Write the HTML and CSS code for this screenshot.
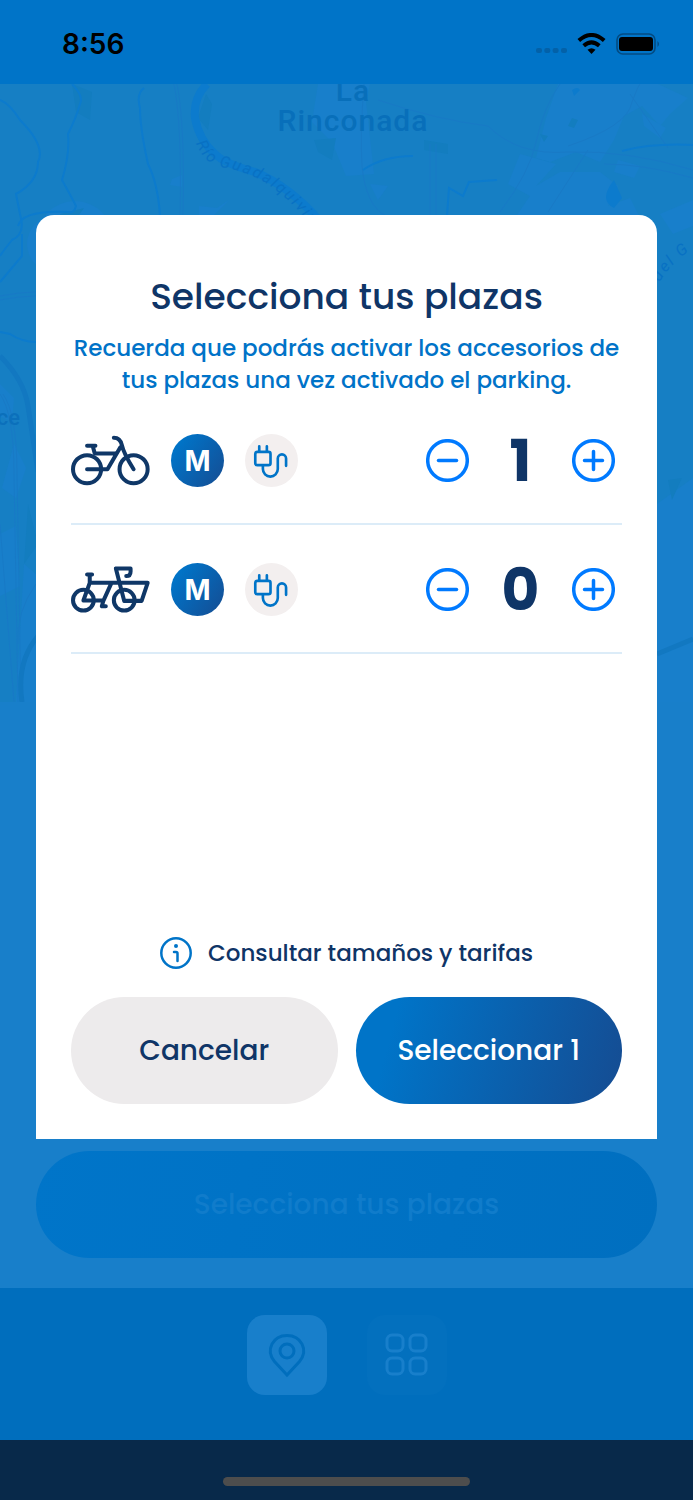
FILE: index.html
```html
<!DOCTYPE html>
<html lang="es">
<head>
  <meta charset="UTF-8" />
  <meta name="viewport" content="width=device-width, initial-scale=1.0"/>
  <title>Selecciona tus plazas</title>
  <link rel="stylesheet" href="styles.css">
</head>
<body>

  <!-- shared icons -->
  <svg class="sprite" aria-hidden="true">
    <symbol id="plug" viewBox="0 0 160 160">
      <rect x="31" y="54" width="46" height="40" rx="6"/>
      <path d="M43 37v15M66 37v15M54 96v10a22 22 0 0 0 45 0V74a12 12 0 0 1 25 0v22"/>
    </symbol>
    <symbol id="minus" viewBox="0 0 43 43">
      <circle cx="21.5" cy="21.5" r="19.8"/>
      <path d="M12.5 21.5h18"/>
    </symbol>
    <symbol id="plus" viewBox="0 0 43 43">
      <circle cx="21.5" cy="21.5" r="19.8"/>
      <path d="M12.5 21.5h18M21.5 12.5v18"/>
    </symbol>
  </svg>

  <div class="screen">

    <header class="status-bar">
      <span class="time">8:56</span>
      <div class="status-icons">
        <svg class="signal" width="31" height="22" viewBox="0 0 31 22">
          <rect x="0" y="15" width="6" height="5" rx="2"/>
          <rect x="8.300" y="15" width="6" height="5" rx="2"/>
          <rect x="16.600" y="15" width="6" height="5" rx="2"/>
          <rect x="25" y="15" width="6" height="5" rx="2"/>
        </svg>
        <svg width="29" height="22" viewBox="0 0 29 22">
          <path d="M1.800 7.600Q14.500 -3.600 27.200 7.600" fill="none" stroke="#000" stroke-width="4"/>
          <path d="M6.700 12.800Q14.500 6 22.300 12.800" fill="none" stroke="#000" stroke-width="4"/>
          <path d="M10.500 16.800Q14.500 13.600 18.500 16.800L14.500 21z"/>
        </svg>
        <svg width="44" height="22" viewBox="0 0 44 22">
          <rect x="1" y="1" width="38" height="20" rx="6" fill="none" stroke="#034b82" stroke-width="1.600"/>
          <rect x="3" y="4" width="34" height="14" rx="3"/>
          <path d="M41.500 8q3 3 0 6z" fill="#034b82"/>
        </svg>
      </div>
    </header>

    <svg class="map" viewBox="0 0 693 618" preserveAspectRatio="xMidYMin slice">
      <g class="town">
        <path d="M318 0h52l-4 18 8 72-28 2-14-34-20-20z"/>
        <path d="M558 0h100l30 14-18 16-10 12-18-20-18 10-10 24-14 22-24-10-26 10-14-4 10-40z"/>
        <path d="M520 70l36 10-20 22 24-14 40 0 18 14-10 20 22-8 10 20-24 22H500l30-44-22-12z"/>
        <path d="M618 76l22 6-6 12-20-6zM642 30l24 14-6 10-16-12zM660 130l33-14v26l-20 8z"/>
        <path d="M199 122l18 2 12-8-18 18-12-2z"/>
        <path d="M172 95l10-4v12l-12-2zM370 100l18 2-10 14zM0 300l14 14-2 24-12-6zM14 360l12 24-10 30-14-10zM0 450l16-8 4 60-20 10zM24 480l12 10v128H16zM657 420l36-26v224h-36z"/>
        <circle cx="75" cy="155" r="38"/>
        <circle cx="55" cy="160" r="28"/>
      </g>
      <g class="park">
        <path d="M72 0l20 8-2 28-14-8zM206 10l6 10-4 26-10-12zM314 56l22-2-4 22-14-8zM424 56l24 4v10l-24-4zM28 420l10 40-14 20zM668 396l14-2-10 22zM572 34l6 2-4 8-6-2zM540 50l8 2-4 6zM60 130l24-6-20 28z"/>
      </g>
      <g class="roads">
        <path d="M174 0q8 40 6 132M177 0q8 40 6 132M364 0q-4 50-2 82 4 40 24 50M430 60v72M436 60v72"/>
        <path d="M378 16q60 20 110 26 30 30 80 26 60-2 125 18M500 128q30-40 36-70 8-36 24-58M568 62q60-20 64-44 6-16 8-18M630 10l38 54M588 66l-40 62M604 80q40 0 89 14"/>
        <path d="M0 212q20-4 36-4M0 216q20-4 36-4M0 310q14 20 14 80l4 228M3 310q14 20 14 80l4 228M0 440l14 178M36 500q-20 28-18 60"/>
      </g>
      <path class="road-wide" d="M0 272q24 24 28 50l10 66M22 618q-6-40 16-66M657 570l36-15"/>
      <g class="streams">
        <path d="M0 16q10 4 20 20 26 26 18 42 0 20-22 32l4 20q6 20-8 26-8 10-12 16"/>
        <path d="M72 0q12 12 8 20-4 14-12 30 2 20-6 46 10 18 14 26-2 8-8 6-46-2-50 14M144 4q-8 6-4 20 0 20 8 56 10 20 12 52M22 150v22L0 198M0 248l10 2q12 8 26 8"/>
        <path d="M447 132l2-28 14 8 6-14 28-2M363 86q20-14 50-14M622 67q30-8 71-6"/>
        <path d="M614 96q-16 20 0 28l8-10zM572 6q6-4 8 0l-6 6z" class="water"/>
      </g>
      <path class="river" d="M207 0q-14 14-12 34 4 22 20 36 10 10 40 18 34 14 64 48"/>
      <path id="rio" d="M196 59q8 20 24 24 20 2 44 15 26 16 50 47l30 40" fill="none"/>
      <path id="canal" d="M660 198q10-20 52-48" fill="none"/>
      <text class="river-name"><textPath href="#rio">Río Guadalquivir</textPath></text>
      <text class="river-name"><textPath href="#canal">del G</textPath></text>
      <text class="place" x="353" y="17">La</text>
      <text class="place" x="353" y="47">Rinconada</text>
      <text class="place-small" x="20" y="341">ce</text>
    </svg>

    <main class="panel">
      <button class="btn btn-back" type="button">Selecciona tus plazas</button>
    </main>

    <nav class="tabs">
      <button class="tab tab-active" type="button" aria-label="Mapa">
        <svg width="80" height="80" viewBox="0 0 80 80">
          <path d="M40 60L27.500 46.500C18 35 26 20.500 40 20.500S62 35 52.500 46.500z"/>
          <circle cx="40" cy="36" r="7"/>
        </svg>
      </button>
      <button class="tab" type="button" aria-label="Menú">
        <svg width="80" height="80" viewBox="0 0 80 80">
          <rect x="20" y="20" width="16" height="16" rx="5"/>
          <rect x="43" y="20" width="16" height="16" rx="5"/>
          <rect x="20" y="43" width="16" height="16" rx="5"/>
          <rect x="43" y="43" width="16" height="16" rx="5"/>
        </svg>
      </button>
    </nav>

    <div class="home-bar"><div class="home-indicator"></div></div>

    <div class="overlay">
      <section class="modal" role="dialog" aria-labelledby="modal-title">
        <h1 id="modal-title">Selecciona tus plazas</h1>
        <p class="hint">Recuerda que podrás activar los accesorios de tus plazas una vez activado el parking.</p>

        <ul class="spaces">
          <li class="space">
            <svg class="bike" width="79" height="51" viewBox="0 0 236 152">
              <circle cx="48" cy="102" r="42"/>
              <circle cx="187" cy="102" r="42"/>
              <path d="M48 32h25M65 33l6 22h62M48 102h61l38-65M128 8q19 0 24 22 5 24 35 72"/>
            </svg>
            <span class="size">M</span>
            <span class="charger"><svg width="53" height="53"><use href="#plug"/></svg></span>
            <div class="stepper">
              <button type="button" aria-label="Quitar bicicleta"><svg width="43" height="43"><use href="#minus"/></svg></button>
              <output>1</output>
              <button type="button" aria-label="Añadir bicicleta"><svg width="43" height="43"><use href="#plus"/></svg></button>
            </div>
          </li>
          <li class="space">
            <svg class="bike" width="79" height="47" viewBox="0 0 236 140">
              <circle cx="37" cy="102" r="31"/>
              <circle cx="159" cy="102" r="31"/>
              <path d="M48 25h15M56 26v24L37 103h60l24-53M56 50h173l-18 54h-52L134 7h44v9q0 14-13 14M97 103l-5 17h12"/>
            </svg>
            <span class="size">M</span>
            <span class="charger"><svg width="53" height="53"><use href="#plug"/></svg></span>
            <div class="stepper">
              <button type="button" aria-label="Quitar bicicleta de carga"><svg width="43" height="43"><use href="#minus"/></svg></button>
              <output>0</output>
              <button type="button" aria-label="Añadir bicicleta de carga"><svg width="43" height="43"><use href="#plus"/></svg></button>
            </div>
          </li>
        </ul>

        <a class="info" href="#">
          <svg width="32" height="32" viewBox="0 0 32 32">
            <circle cx="16" cy="16" r="14.700"/>
            <path d="M14 15h2q1.500 0 1.500 1.500V24"/>
            <circle class="dot" cx="16" cy="9" r="2"/>
          </svg>
          Consultar tamaños y tarifas
        </a>

        <div class="actions">
          <button class="btn btn-cancel" type="button">Cancelar</button>
          <button class="btn btn-select" type="button">Seleccionar 1</button>
        </div>
      </section>
    </div>

  </div>

</body>
</html>
```
FILE: styles.css
```css
* {
  box-sizing: border-box;
  margin: 0;
  padding: 0;
}

body {
  font-family: Poppins, Inter, sans-serif;
  font-weight: 500;
  color: #0f3567;
  background: #187fca;
}

button {
  border: none;
  background: none;
  font: inherit;
  cursor: pointer;
}

svg {
  display: block;
}

.sprite {
  display: none;
}

.screen {
  position: relative;
  display: flex;
  flex-direction: column;
  min-height: 100vh;
}

/* status bar */
.status-bar {
  display: flex;
  justify-content: space-between;
  align-items: center;
  height: 84px;
  padding: 4px 33px 0 62px;
  background: #0074c8;
  color: #000;
}

.time {
  font-family: Inter, sans-serif;
  font-size: 28px;
  font-weight: 600;
}

.status-icons {
  display: flex;
  gap: 10px;
}

.signal {
  fill: #0361a8;
}

/* map */
.map {
  width: 100%;
  height: 618px;
  background: #167fc4;
}

.town { fill: #187fcb; }
.park { fill: #137dbf; }

.roads {
  fill: none;
  stroke: #187ac6;
  stroke-width: 1;
}

.road-wide {
  fill: none;
  stroke: #1278c1;
  stroke-width: 5;
}

.streams {
  fill: none;
  stroke: #0c7bcd;
  stroke-width: 2;
}

.water {
  fill: #0c7bcd;
  stroke: none;
}

.river {
  fill: none;
  stroke: #0c7bcd;
  stroke-width: 8;
}

.river-name {
  font: italic 400 16px Roboto, sans-serif;
  letter-spacing: 2px;
  fill: #0871c3;
}

.place {
  font: 500 30px Roboto, sans-serif;
  letter-spacing: 1px;
  fill: #086fba;
  text-anchor: middle;
}

.place-small {
  font: 500 22px Roboto, sans-serif;
  fill: #0b70bb;
  text-anchor: end;
}

/* page behind the modal */
.panel {
  flex: 1;
  display: flex;
  align-items: flex-end;
  padding: 0 36px 30px;
}

.btn {
  flex: 1;
  height: 107px;
  border-radius: 54px;
  font-size: 28px;
}

.btn-back {
  background: linear-gradient(100deg, #0075c9, #006fc0);
  color: #107ccb;
}

.tabs {
  display: flex;
  justify-content: center;
  align-items: flex-start;
  gap: 40px;
  height: 152px;
  padding-top: 27px;
  background: #006ebd;
}

.tab {
  border-radius: 18px;
  background: #0370be;
}

.tab svg {
  fill: none;
  stroke: #187fcb;
  stroke-width: 3;
}

.tab-active {
  background: #187fcb;
}

.tab-active svg {
  stroke: #006ebd;
}

.home-bar {
  height: 60px;
  padding-top: 37px;
  background: #08294a;
}

.home-indicator {
  width: 247px;
  height: 9px;
  margin: 0 auto;
  border-radius: 5px;
  background: #4d4d4d;
}

/* modal */
.overlay {
  position: absolute;
  inset: 0;
  display: flex;
  padding: 215px 36px 361px;
}

.modal {
  flex: 1;
  display: flex;
  flex-direction: column;
  padding: 55px 35px 35px;
  border-radius: 18px 18px 0 0;
  background: #fff;
  text-align: center;
}

h1 {
  margin-bottom: 8px;
  font-size: 36px;
  font-weight: 500;
  line-height: 54px;
}

.hint {
  font-size: 23px;
  line-height: 32px;
  color: #0073c8;
}

.spaces {
  flex: 1;
  list-style: none;
}

.space {
  display: flex;
  align-items: center;
  gap: 21px;
  height: 129px;
  padding-top: 2px;
  border-bottom: 2px solid #dcecf8;
}

.bike {
  fill: none;
  stroke: #0f3767;
  stroke-width: 12;
  stroke-linecap: round;
  stroke-linejoin: round;
}

.size,
.charger {
  display: flex;
  align-items: center;
  justify-content: center;
  width: 53px;
  height: 53px;
  border-radius: 50%;
}

.size {
  background: linear-gradient(125deg, #0074c8 15%, #154c92);
  color: #fff;
  font-family: Inter, sans-serif;
  font-size: 28px;
  font-weight: 700;
}

.charger {
  background: #f3efef;
  fill: none;
  stroke: #0074c8;
  stroke-width: 8;
  stroke-linecap: round;
}

.stepper {
  display: flex;
  align-items: center;
  margin-left: auto;
  padding-right: 7px;
}

.stepper svg {
  fill: none;
  stroke: #007aff;
  stroke-width: 3.5;
  stroke-linecap: round;
}

.stepper output {
  width: 103px;
  font-size: 58px;
  font-weight: 700;
  line-height: 64px;
}

.info {
  display: flex;
  align-items: center;
  justify-content: center;
  gap: 16px;
  margin-bottom: 26px;
  font-size: 23px;
  line-height: 36px;
  color: inherit;
  text-decoration: none;
}

.info svg {
  fill: none;
  stroke: #0074c8;
  stroke-width: 2.5;
  stroke-linecap: round;
}

.info .dot {
  fill: #0074c8;
  stroke: none;
}

.actions {
  display: flex;
  gap: 18px;
}

.btn-cancel {
  background: #edebec;
  color: #0f3567;
}

.btn-select {
  background: linear-gradient(105deg, #0074c8 15%, #154c92);
  color: #fff;
}
```
